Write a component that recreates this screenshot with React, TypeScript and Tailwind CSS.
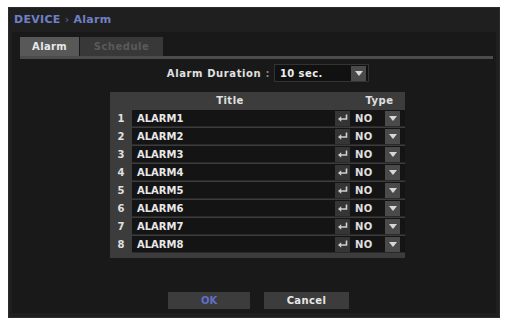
const rows = ["ALARM1", "ALARM2", "ALARM3", "ALARM4", "ALARM5", "ALARM6", "ALARM7", "ALARM8"];

function Arrow() {
  return (
    <div className="flex h-[15px] w-[15px] items-center justify-center bg-[#4a4a4a]">
      <svg width="8" height="5" viewBox="0 0 8 5">
        <polygon points="0,0 8,0 4,5" fill="#d8d8d8" />
      </svg>
    </div>
  );
}

function EnterIcon() {
  return (
    <div className="flex h-[15px] w-[15px] items-center justify-center bg-[#353535]">
      <svg width="10" height="8" viewBox="0 0 10 8">
        <path d="M8.5 0.5 V5 H2.5" stroke="#d0d0d0" strokeWidth="1.6" fill="none" />
        <polygon points="0,5 3.2,2.2 3.2,7.8" fill="#d0d0d0" />
      </svg>
    </div>
  );
}

export default function App() {
  return (
    <div
      className="h-[321px] w-[507px] bg-white pl-[8px] pt-[7px] font-bold"
      style={{ fontFamily: "'DejaVu Sans', Verdana, sans-serif" }}
    >
      <div className="flex h-[311px] w-[492px] flex-col border border-[#2c2c2c] bg-[#1f1f1f]">
        <div className="flex h-[24px] items-center pl-[5px] text-[11px] tracking-[0.3px] text-[#6f80c8]">
          DEVICE <span className="mx-[4px] text-[#4a5a90]">›</span> Alarm
        </div>
        <div className="mx-[3px] mb-[4px] flex flex-1 flex-col bg-[#191919]">
          <div className="flex pl-[8px] pt-[5px]">
            <div className="flex h-[19px] w-[59px] items-center justify-center bg-[#585858] text-[10px] tracking-[0.3px] text-[#e8e8e8]">
              Alarm
            </div>
            <div className="ml-[1px] flex h-[19px] w-[83px] items-center justify-center bg-[#383838] text-[10px] tracking-[0.5px] text-[#5a5a5a]">
              Schedule
            </div>
          </div>
          <div className="ml-[8px] mr-[3px] h-[3px] bg-[#4c4c4c]" />
          <div className="mt-[5px] flex items-center pl-[150px]">
            <span className="w-[108px] text-right text-[10px] tracking-[0.6px] text-[#e0e0e0]">
              Alarm Duration <span className="text-[#888]">:</span>
            </span>
            <div className="ml-[4px] flex h-[18px] w-[95px] items-center justify-between border border-[#333] bg-[#111] pl-[5px] pr-[2px] text-[10px] tracking-[0.4px] text-[#eee]">
              10 sec.
              <Arrow />
            </div>
          </div>
          <div className="ml-[98px] mt-[10px] flex w-[295px] flex-col bg-[#3c3c3c] pb-[5px]">
            <div className="flex h-[17px] items-center text-[10px] tracking-[0.5px] text-[#e0e0e0]">
              <span className="w-[22px]" />
              <span className="w-[196px] text-center">Title</span>
              <span className="flex-1 pl-[26px] text-center">Type</span>
            </div>
            {rows.map((r, i) => (
              <div key={r} className="mt-[1px] flex h-[17px] items-stretch">
                <span className="flex w-[22px] items-center justify-center text-[10px] text-[#e0e0e0]">
                  {i + 1}
                </span>
                <div className="flex flex-1 items-center border-b border-[#2a2a2a] bg-[#141414] pl-[5px] pr-[5px] text-[10px] text-[#e8e8e8]">
                  <span className="flex-1">{r}</span>
                  <EnterIcon />
                  <span className="ml-[5px] w-[30px] tracking-[0.3px] text-[#e0e0e0]">NO</span>
                  <Arrow />
                </div>
              </div>
            ))}
          </div>
          <div className="mt-auto mb-[4px] flex pl-[156px]">
            <div className="flex h-[17px] w-[82px] items-center justify-center bg-[#3c3c3c] text-[10px] text-[#6070c8]">
              OK
            </div>
            <div className="ml-[14px] flex h-[17px] w-[85px] items-center justify-center bg-[#3c3c3c] text-[10px] tracking-[0.4px] text-[#e8e8e8]">
              Cancel
            </div>
          </div>
        </div>
      </div>
    </div>
  );
}
